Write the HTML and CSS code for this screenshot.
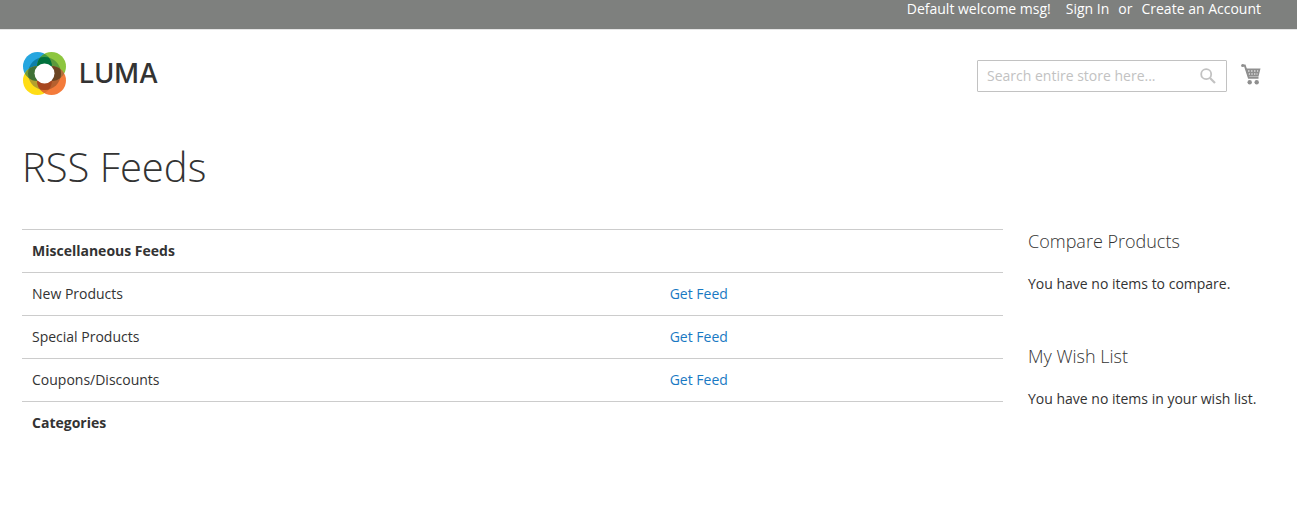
FILE: index.html
```html
<!DOCTYPE html>
<html lang="en">
<head>
    <meta charset="UTF-8">
    <meta name="viewport" content="width=device-width, initial-scale=1.0">
    <title>RSS Feeds</title>
    <link rel="stylesheet" href="styles.css">
</head>
<body>
    <header class="page-header">
        <div class="panel">
            <ul class="header-links">
                <li class="welcome">Default welcome msg!</li>
                <li><a href="#">Sign In</a></li>
                <li>or</li>
                <li><a href="#">Create an Account</a></li>
            </ul>
        </div>
        <div class="header-content">
            <a class="logo" href="#" aria-label="Luma">
                <svg class="logo-mark" width="44" height="44" viewBox="0 0 44 44" aria-hidden="true">
                    <defs>
                        <clipPath id="blue"><circle cx="14.5" cy="14.5" r="14.5"/></clipPath>
                        <clipPath id="orange"><circle cx="28.5" cy="28.5" r="14.5"/></clipPath>
                        <clipPath id="ring"><circle cx="21.5" cy="21.5" r="16.5"/></clipPath>
                    </defs>
                    <circle cx="14.5" cy="14.5" r="14.5" fill="#26a6df"/>
                    <circle cx="28.5" cy="14.5" r="14.5" fill="#8dc63f"/>
                    <circle cx="14.5" cy="28.5" r="14.5" fill="#ffdd15"/>
                    <circle cx="28.5" cy="28.5" r="14.5" fill="#f47b3b"/>
                    <!-- overlaps of neighbouring circles, light outside the ring -->
                    <circle cx="28.5" cy="14.5" r="14.5" fill="#3f9a45" clip-path="url(#blue)"/>
                    <circle cx="14.5" cy="28.5" r="14.5" fill="#6f9a3a" clip-path="url(#blue)"/>
                    <circle cx="28.5" cy="14.5" r="14.5" fill="#b0703a" clip-path="url(#orange)"/>
                    <circle cx="14.5" cy="28.5" r="14.5" fill="#e0702a" clip-path="url(#orange)"/>
                    <!-- darker shades inside the ring -->
                    <g clip-path="url(#ring)">
                        <circle cx="14.5" cy="14.5" r="14.5" fill="#0e7fa8"/>
                        <circle cx="28.5" cy="14.5" r="14.5" fill="#5c9a3c"/>
                        <circle cx="14.5" cy="28.5" r="14.5" fill="#b3a02e"/>
                        <circle cx="28.5" cy="28.5" r="14.5" fill="#b5602f"/>
                        <circle cx="28.5" cy="14.5" r="14.5" fill="#00713c" clip-path="url(#blue)"/>
                        <circle cx="14.5" cy="28.5" r="14.5" fill="#3f7236" clip-path="url(#blue)"/>
                        <circle cx="28.5" cy="14.5" r="14.5" fill="#6b4422" clip-path="url(#orange)"/>
                        <circle cx="14.5" cy="28.5" r="14.5" fill="#a8471f" clip-path="url(#orange)"/>
                    </g>
                    <circle cx="21.5" cy="21.5" r="10" fill="#fff"/>
                </svg>
                <span class="logo-text">LUMA</span>
            </a>
            <div class="header-tools">
                <form class="search">
                    <input type="text" placeholder="Search entire store here..." aria-label="Search">
                    <button type="submit" aria-label="Search">
                        <svg width="16" height="16" viewBox="0 0 16 16" fill="none" stroke="#c2c2c2">
                            <circle cx="6.2" cy="6.2" r="5" stroke-width="1.8"/>
                            <path d="M10 10l5 5" stroke-width="2.2"/>
                        </svg>
                    </button>
                </form>
                <a class="cart" href="#" aria-label="My Cart">
                    <svg width="20" height="21" viewBox="0 0 20 21">
                        <path d="M1.5 1.5h2.3l4 12.3h9.7" fill="none" stroke="#8f8f8f" stroke-width="1.9"/>
                        <circle cx="1.6" cy="1.6" r="1.5" fill="#8f8f8f"/>
                        <path d="M4.3 4.5h15.2l-2 8H7z" fill="#8f8f8f"/>
                        <path d="M7 7h1.5M10 7h1.5M13 7h1.5M16 7h1.2M7.8 10h1.2M10.3 10h1.4M13 10h1.4M15.5 10h1" stroke="#fff" stroke-width="1.2"/>
                        <circle cx="8.7" cy="18.3" r="2.2" fill="#8f8f8f"/>
                        <circle cx="15.7" cy="18.3" r="2.2" fill="#8f8f8f"/>
                    </svg>
                </a>
            </div>
        </div>
    </header>

    <main class="page-main">
        <h1>RSS Feeds</h1>
        <div class="columns">
            <table class="feeds">
                <tbody>
                    <tr>
                        <th colspan="2">Miscellaneous Feeds</th>
                    </tr>
                    <tr>
                        <td class="name">New Products</td>
                        <td><a href="#">Get Feed</a></td>
                    </tr>
                    <tr>
                        <td class="name">Special Products</td>
                        <td><a href="#">Get Feed</a></td>
                    </tr>
                    <tr>
                        <td class="name">Coupons/Discounts</td>
                        <td><a href="#">Get Feed</a></td>
                    </tr>
                    <tr>
                        <th colspan="2">Categories</th>
                    </tr>
                </tbody>
            </table>
            <aside class="sidebar">
                <section class="block">
                    <h2>Compare Products</h2>
                    <p>You have no items to compare.</p>
                </section>
                <section class="block">
                    <h2>My Wish List</h2>
                    <p>You have no items in your wish list.</p>
                </section>
            </aside>
        </div>
    </main>
</body>
</html>
```

FILE: styles.css
```css
* {
    margin: 0;
    padding: 0;
    box-sizing: border-box;
}

body {
    font-family: "Open Sans", "Noto Sans", sans-serif;
    font-size: 14px;
    line-height: 20px;
    color: #333;
    background: #fff;
}

a {
    color: #1979c3;
    text-decoration: none;
}

a:hover {
    text-decoration: underline;
}

.panel {
    background: #7e807e;
    border-bottom: 1px solid #e5e5e5;
    padding: 0 36px 11px 22px;
}

.header-links {
    display: flex;
    justify-content: flex-end;
    gap: 9px;
    line-height: 18px;
    list-style: none;
    color: #fff;
}

.header-links a {
    color: #fff;
}

.header-links .welcome {
    margin-right: 6px;
}

.header-content {
    display: flex;
    justify-content: space-between;
    align-items: flex-start;
    padding: 22px 36px 0 22px;
}

.logo {
    display: flex;
    align-items: center;
    gap: 12px;
    color: #333;
}

.logo:hover {
    text-decoration: none;
}

.logo-mark {
    margin-left: 1px;
}

.logo-text {
    font-family: Inter, sans-serif;
    font-size: 27px;
    font-weight: 500;
}

.header-tools {
    display: flex;
    align-items: flex-start;
    gap: 14px;
    padding-top: 8px;
}

.search {
    display: flex;
    align-items: center;
    width: 250px;
    height: 32px;
    border: 1px solid #c2c2c2;
    border-radius: 1px;
}

.search input {
    flex: 1;
    min-width: 0;
    border: 0;
    outline: 0;
    padding: 0 9px;
    font: inherit;
    color: #333;
    background: none;
}

.search input::placeholder {
    color: #c2c2c2;
    opacity: 1;
}

.search button {
    display: flex;
    padding: 0 10px;
    border: 0;
    background: none;
    cursor: pointer;
}

.cart {
    display: flex;
    padding-top: 4px;
}

.page-main {
    padding: 49px 35px 40px 22px;
}

h1 {
    font-size: 40px;
    font-weight: 300;
    line-height: 44px;
    margin-bottom: 40px;
}

.columns {
    display: grid;
    grid-template-columns: 981fr 234fr;
    column-gap: 25px;
}

.feeds {
    width: 100%;
    border-collapse: collapse;
    align-self: start;
}

.feeds th,
.feeds td {
    border-top: 1px solid #ccc;
    padding: 11px 10px;
    text-align: left;
    vertical-align: top;
}

.feeds .name {
    width: 65%;
}

.block {
    margin-bottom: 50px;
}

.block h2 {
    font-size: 18px;
    font-weight: 300;
    line-height: 25px;
    margin-bottom: 20px;
}
```
